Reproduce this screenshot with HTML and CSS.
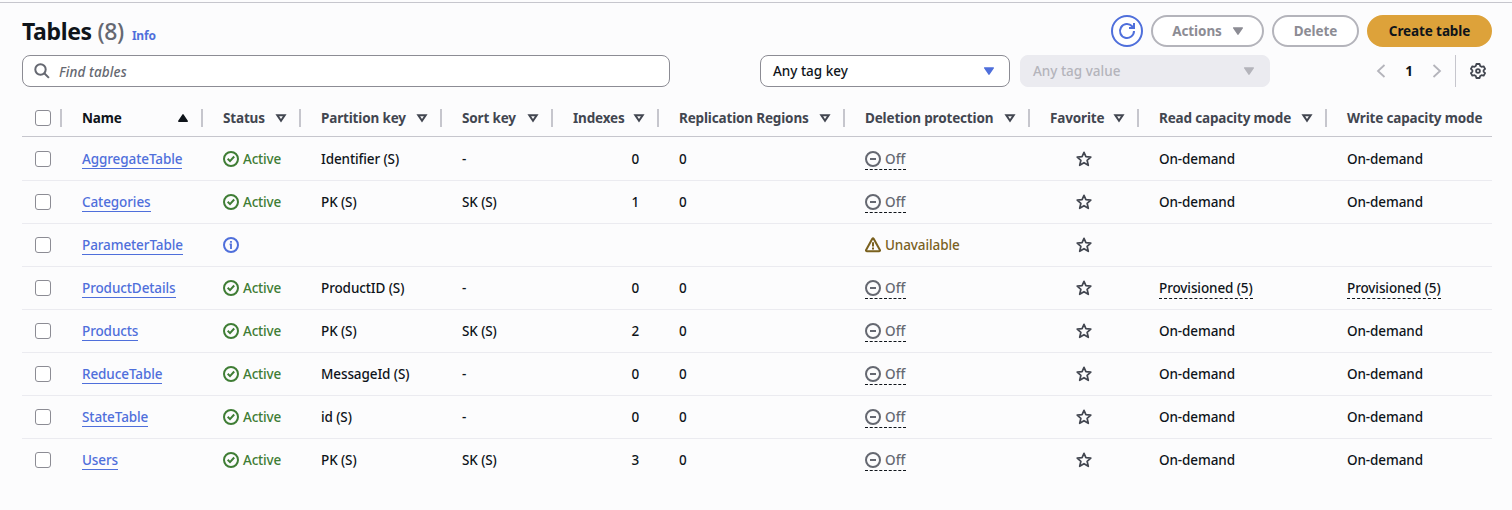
FILE: index.html
```html
<!DOCTYPE html>
<html lang="en">
<head>
<meta charset="utf-8">
<title>Tables</title>
<link rel="stylesheet" href="styles.css">
</head>
<body>
<svg class="sprite" aria-hidden="true">
  <symbol id="ok" viewBox="0 0 16 16"><circle cx="8" cy="8" r="7"/><path d="m4.7 7.8 2.3 2.3 4.2-4.6"/></symbol>
  <symbol id="info" viewBox="0 0 16 16"><circle cx="8" cy="8" r="7"/><path d="M6.6 7.4H8V12M8 5.8V4" stroke-width="1.8"/></symbol>
  <symbol id="off" viewBox="0 0 16 16"><circle cx="8" cy="8" r="7"/><path d="M5 8h6"/></symbol>
  <symbol id="warn" viewBox="0 0 16 16"><path d="M7.3 1.7 1.1 13q-.5 1.1.7 1.2h12.4q1.2-.1.7-1.2L8.7 1.7q-.7-1-1.4 0ZM8 5.2v4.3M8 10.6v1.8"/></symbol>
  <symbol id="star" viewBox="0 0 16 16"><path stroke-width="1.7" stroke-linejoin="round" d="m8 1.4 1.9 4.3 4.9.4-3.7 3.2 1.2 5L8 11.7l-4.3 2.6 1.2-5-3.7-3.2 4.9-.4Z"/></symbol>
  <symbol id="sort" viewBox="0 0 16 16"><path d="M4.3 5.2h7.4L8 10.8Z"/></symbol>
  <symbol id="asc" viewBox="0 0 16 16"><path d="M3.8 11.2h8.4L8 4.9Z" fill="currentColor" stroke="currentColor" stroke-width="1.5" stroke-linejoin="round"/></symbol>
  <symbol id="caret" viewBox="0 0 16 16"><path d="M3.7 4.9h8.6L8 11.1Z" fill="currentColor" stroke="currentColor" stroke-width="1.5" stroke-linejoin="round"/></symbol>
</svg>
<main class="panel">
  <header class="top">
    <h1 class="title">Tables <span class="count">(8)</span></h1>
    <a class="info">Info</a>
    <div class="actions">
      <button class="btn refresh" aria-label="Refresh"><svg class="icon" viewBox="0 0 16 16"><path d="M15 8a7 7 0 1 1-1.9-4.8L15 5M15 0v5h-5"/></svg></button>
      <button class="btn menu">Actions <svg class="icon"><use href="#caret"/></svg></button>
      <button class="btn delete">Delete</button>
      <button class="btn create">Create table</button>
    </div>
  </header>
  <div class="filters">
    <div class="search"><svg class="icon" viewBox="0 0 16 16"><circle cx="6.5" cy="6.5" r="5.2"/><path d="m10.3 10.3 4.6 4.6"/></svg><span>Find tables</span></div>
    <div class="select"><span>Any tag key</span><svg class="icon"><use href="#caret"/></svg></div>
    <div class="select disabled"><span>Any tag value</span><svg class="icon"><use href="#caret"/></svg></div>
    <div class="pager">
      <svg class="icon" viewBox="0 0 16 16"><path d="M11.5 2 5 8l6.5 6"/></svg>
      <b class="page">1</b>
      <svg class="icon" viewBox="0 0 16 16"><path d="m4.5 2 6.5 6-6.5 6"/></svg>
    </div>
    <div class="settings"><svg class="icon" viewBox="0 0 16 16"><path stroke-linejoin="round" d="M6.4 1h3.2l.6 2 1.3.8 2.1-.5 1.5 2.6L13.6 7.300v1.4l1.5 1.400-1.500 2.600-2.100-.5-1.300.8-.6 2H6.400l-.6-2-1.300-.8-2.100.5L.9 10.100l1.500-1.400V7.300L.9 5.900l1.500-2.600 2.100.5L5.800 3Z"/><circle cx="8" cy="8" r="1.9"/></svg></div>
  </div>
  <table class="grid">
    <colgroup><col class="c-check"><col class="c-name"><col class="c-status"><col class="c-pk"><col class="c-sk"><col class="c-idx"><col class="c-rep"><col class="c-del"><col class="c-fav"><col class="c-read"><col class="c-write"></colgroup>
    <thead><tr>
      <th class="check"><i class="box"></i></th>
      <th class="sorted"><div class="head"><span>Name</span><svg class="icon"><use href="#asc"/></svg></div></th>
      <th><div class="head"><span>Status</span><svg class="icon"><use href="#sort"/></svg></div></th>
      <th><div class="head"><span>Partition key</span><svg class="icon"><use href="#sort"/></svg></div></th>
      <th><div class="head"><span>Sort key</span><svg class="icon"><use href="#sort"/></svg></div></th>
      <th><div class="head"><span>Indexes</span><svg class="icon"><use href="#sort"/></svg></div></th>
      <th><div class="head"><span>Replication Regions</span><svg class="icon"><use href="#sort"/></svg></div></th>
      <th><div class="head"><span>Deletion protection</span><svg class="icon"><use href="#sort"/></svg></div></th>
      <th><div class="head"><span>Favorite</span><svg class="icon"><use href="#sort"/></svg></div></th>
      <th><div class="head"><span>Read capacity mode</span><svg class="icon"><use href="#sort"/></svg></div></th>
      <th><div class="head last"><span>Write capacity mode</span></div></th>
    </tr></thead>
    <tbody>
      <tr><td class="check"><i class="box"></i></td><td><a class="link">AggregateTable</a></td><td><span class="state active"><svg class="icon"><use href="#ok"/></svg>Active</span></td><td>Identifier (S)</td><td>-</td><td class="num">0</td><td>0</td><td><span class="state off"><svg class="icon"><use href="#off"/></svg>Off</span></td><td class="fav"><svg class="icon"><use href="#star"/></svg></td><td>On-demand</td><td>On-demand</td></tr>
      <tr><td class="check"><i class="box"></i></td><td><a class="link">Categories</a></td><td><span class="state active"><svg class="icon"><use href="#ok"/></svg>Active</span></td><td>PK (S)</td><td>SK (S)</td><td class="num">1</td><td>0</td><td><span class="state off"><svg class="icon"><use href="#off"/></svg>Off</span></td><td class="fav"><svg class="icon"><use href="#star"/></svg></td><td>On-demand</td><td>On-demand</td></tr>
      <tr><td class="check"><i class="box"></i></td><td><a class="link">ParameterTable</a></td><td><span class="state notice"><svg class="icon"><use href="#info"/></svg></span></td><td></td><td></td><td></td><td></td><td><span class="state warning"><svg class="icon"><use href="#warn"/></svg>Unavailable</span></td><td class="fav"><svg class="icon"><use href="#star"/></svg></td><td></td><td></td></tr>
      <tr><td class="check"><i class="box"></i></td><td><a class="link">ProductDetails</a></td><td><span class="state active"><svg class="icon"><use href="#ok"/></svg>Active</span></td><td>ProductID (S)</td><td>-</td><td class="num">0</td><td>0</td><td><span class="state off"><svg class="icon"><use href="#off"/></svg>Off</span></td><td class="fav"><svg class="icon"><use href="#star"/></svg></td><td><span class="prov">Provisioned (5)</span></td><td><span class="prov">Provisioned (5)</span></td></tr>
      <tr><td class="check"><i class="box"></i></td><td><a class="link">Products</a></td><td><span class="state active"><svg class="icon"><use href="#ok"/></svg>Active</span></td><td>PK (S)</td><td>SK (S)</td><td class="num">2</td><td>0</td><td><span class="state off"><svg class="icon"><use href="#off"/></svg>Off</span></td><td class="fav"><svg class="icon"><use href="#star"/></svg></td><td>On-demand</td><td>On-demand</td></tr>
      <tr><td class="check"><i class="box"></i></td><td><a class="link">ReduceTable</a></td><td><span class="state active"><svg class="icon"><use href="#ok"/></svg>Active</span></td><td>MessageId (S)</td><td>-</td><td class="num">0</td><td>0</td><td><span class="state off"><svg class="icon"><use href="#off"/></svg>Off</span></td><td class="fav"><svg class="icon"><use href="#star"/></svg></td><td>On-demand</td><td>On-demand</td></tr>
      <tr><td class="check"><i class="box"></i></td><td><a class="link">StateTable</a></td><td><span class="state active"><svg class="icon"><use href="#ok"/></svg>Active</span></td><td>id (S)</td><td>-</td><td class="num">0</td><td>0</td><td><span class="state off"><svg class="icon"><use href="#off"/></svg>Off</span></td><td class="fav"><svg class="icon"><use href="#star"/></svg></td><td>On-demand</td><td>On-demand</td></tr>
      <tr><td class="check"><i class="box"></i></td><td><a class="link">Users</a></td><td><span class="state active"><svg class="icon"><use href="#ok"/></svg>Active</span></td><td>PK (S)</td><td>SK (S)</td><td class="num">3</td><td>0</td><td><span class="state off"><svg class="icon"><use href="#off"/></svg>Off</span></td><td class="fav"><svg class="icon"><use href="#star"/></svg></td><td>On-demand</td><td>On-demand</td></tr>
    </tbody>
  </table>
</main>
</body>
</html>
```
FILE: styles.css
```css
* { box-sizing: border-box; }
body {
  margin: 0;
  padding-top: 2px;
  height: 510px;
  overflow: hidden;
  background: #fcfcfd;
  color: #0f141a;
  font: 500 13.5px/20px "Noto Sans", sans-serif;
  letter-spacing: -0.1px;
}
.sprite { display: none; }
.icon { width: 16px; height: 16px; flex: none; fill: none; stroke: currentColor; stroke-width: 2; overflow: visible; }
.panel { border-top: 1px solid #c6c6cd; padding: 12px 20px 0 22px; }

.top { display: flex; height: 32px; }
.title { margin: 0; font-size: 23px; line-height: 32px; font-weight: 700; letter-spacing: -0.35px; white-space: nowrap; }
.count { color: #656871; font-weight: 500; }
.info { margin: 11px 0 0 8px; font-size: 12px; font-weight: 700; color: #4f6fdb; letter-spacing: -0.2px; }
.actions { display: flex; gap: 8px; margin-left: auto; }
.btn {
  display: flex; align-items: center; justify-content: center;
  height: 32px; padding: 0; border: 2px solid #b4b4bb; border-radius: 16px;
  background: #fff; color: #8c8c94; font: 700 13.5px/20px "Noto Sans", sans-serif; letter-spacing: -0.1px;
}
.refresh { width: 32px; border-color: #4f6fdb; color: #4f6fdb; }
.menu { width: 113px; gap: 8px; padding-left: 3px; }
.delete { width: 87px; }
.create { width: 125px; border-color: #dda23a; background: #dda23a; color: #0f141a; }

.filters { display: flex; height: 32px; margin-top: 8px; }
.search { display: flex; align-items: center; gap: 9px; width: 648px; padding: 0 11px; border: 1px solid #8c8c94; border-radius: 8px; background: #fff; color: #656871; font-style: italic; letter-spacing: 0.1px; }
.search span { padding-top: 1px; }
.select { display: flex; align-items: center; justify-content: space-between; width: 250px; margin-left: 90px; padding: 0 12px; border: 1px solid #8c8c94; border-radius: 8px; background: #fff; letter-spacing: 0; }
.select .icon { color: #4f6fdb; }
.select.disabled { margin-left: 10px; border-color: #ebebf0; background: #ebebf0; color: #b4b4bb; }
.disabled .icon { color: #b4b4bb; }
.pager { display: flex; align-items: center; justify-content: space-between; width: 72px; margin-left: 103px; color: #b4b4bb; }
.page { color: #0f141a; }
.pager .icon, .settings .icon { stroke-width: 1.8; }
.settings { display: flex; align-items: center; justify-content: flex-end; margin-left: auto; border-left: 1px solid #c6c6cd; padding-right: 6px; width: 37px; color: #424650; }

.grid { width: 1470px; margin-top: 13px; border-collapse: separate; border-spacing: 0; table-layout: fixed; }
.c-check { width: 40px; } .c-name { width: 141px; } .c-status { width: 98px; } .c-pk { width: 141px; }
.c-sk { width: 111px; } .c-idx { width: 106px; } .c-rep { width: 186px; } .c-del { width: 185px; }
.c-fav { width: 109px; } .c-read { width: 188px; } .c-write { width: 165px; }
th { height: 37px; padding: 0; border-bottom: 1px solid #c6c6cd; color: #424650; text-align: left; white-space: nowrap; letter-spacing: -0.16px; }
.head { display: flex; align-items: center; justify-content: space-between; height: 18px; padding: 0 10px 0 20px; border-right: 2px solid #c6c6cd; }
.head.last { border-right: 0; padding-right: 0; }
.sorted { color: #0f141a; }
td { height: 43px; padding: 0 20px; border-bottom: 1px solid #ebebf0; white-space: nowrap; }
tbody tr:first-child td { height: 44px; padding-top: 1px; }
tbody tr:last-child td { border-bottom-color: transparent; }
.grid .check { padding-left: 13px; padding-right: 0; }
th.check { background: linear-gradient(#c6c6cd, #c6c6cd) 38px 9px / 2px 18px no-repeat; }
th.check .box { margin-bottom: 1px; }
.box { display: block; width: 16px; height: 16px; border: 1px solid #8c8c94; border-radius: 3px; background: #fff; }
.link { display: block; width: max-content; height: 20px; border-bottom: 1px solid #4f6fdb; color: #4f6fdb; }
.state { display: flex; width: max-content; align-items: center; gap: 4px; }
.active { color: #3f7d35; letter-spacing: -0.2px; }
.notice { color: #4f6fdb; }
.off { height: 21px; margin-top: 1px; border-bottom: 1px dashed #0f141a; color: #656871; letter-spacing: 0.1px; }
.warning { color: #7a611f; }
.grid .num { text-align: right; }
.grid .fav { padding-left: 0; padding-right: 1px; color: #424650; }
.fav .icon { display: block; margin: 0 auto; }
.prov { display: block; width: max-content; height: 21px; margin-top: 1px; border-bottom: 1px dashed #0f141a; }
```
